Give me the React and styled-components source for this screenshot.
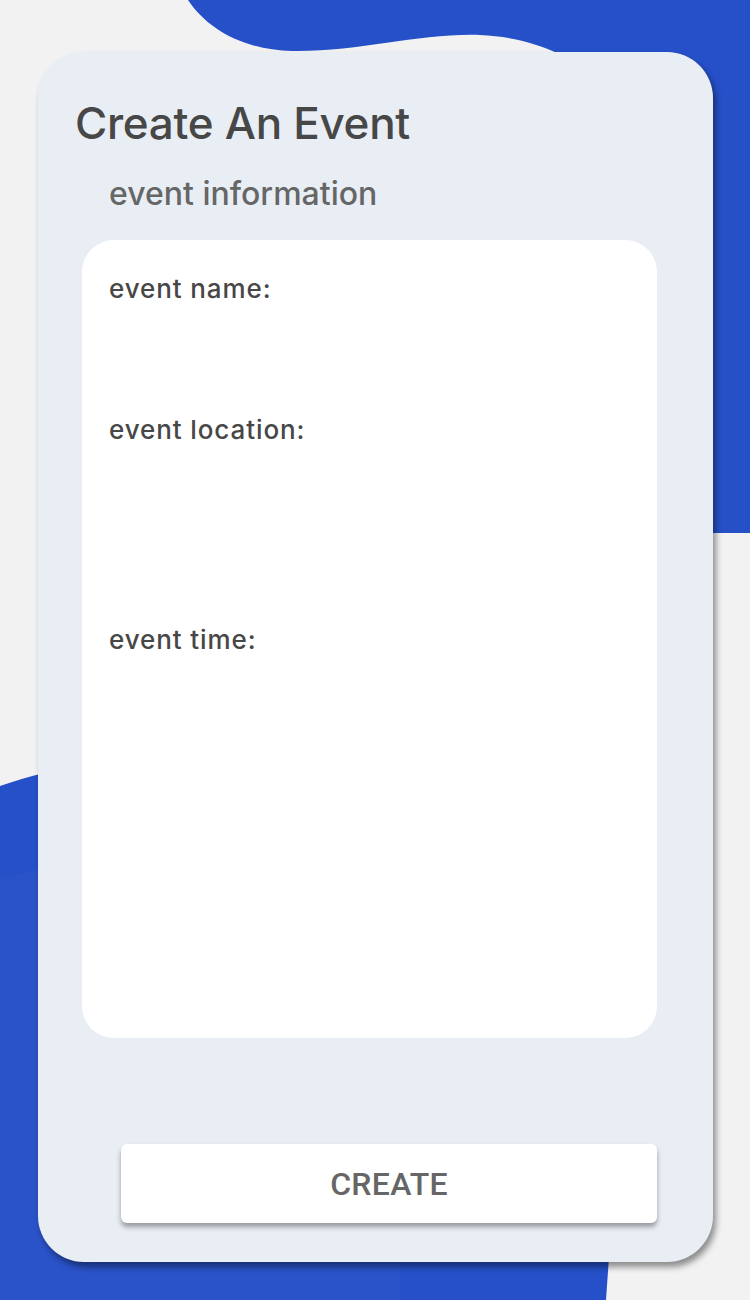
import React from "react";
import styled, { createGlobalStyle } from "styled-components";

const GlobalStyle = createGlobalStyle`
  html, body { margin: 0; padding: 0; background: #f2f2f2; }
  * { box-sizing: border-box; }
`;

const Page = styled.div`
  position: relative;
  width: 750px;
  height: 1300px;
  overflow: hidden;
  background: #f2f2f2;
  padding: 52px 37px 0 38px;
  font-family: Inter, "Open Sans", sans-serif;
`;

const Backdrop = styled.svg`
  position: absolute;
  inset: 0;
  width: 750px;
  height: 1300px;
  z-index: 0;
`;

const Card = styled.section`
  position: relative;
  z-index: 1;
  width: 675px;
  height: 1210px;
  background: #e9eef5;
  border-radius: 46px;
  box-shadow: 3px 5px 6px rgba(0, 0, 0, 0.42);
  display: flex;
  flex-direction: column;
  padding: 43px 56px 0 37px;
`;

const Title = styled.h1`
  margin: 0;
  font-size: 44px;
  font-weight: 500;
  line-height: 56px;
  color: #474747;
  letter-spacing: -0.3px;
`;

const Subtitle = styled.h2`
  margin: 23px 0 0 34px;
  font-size: 32px;
  font-weight: 500;
  line-height: 40px;
  color: #666666;
  letter-spacing: 0;
`;

const Panel = styled.div`
  margin: 26px 0 0 7px;
  width: 575px;
  height: 798px;
  background: #ffffff;
  border-radius: 32px;
  padding: 33px 27px;
  display: flex;
  flex-direction: column;
`;

const Field = styled.div`
  height: ${(p) => p.$space}px;
`;

const Label = styled.label`
  display: block;
  font-size: 26px;
  font-weight: 500;
  line-height: 32px;
  color: #474747;
  letter-spacing: 0.9px;
`;

const Footer = styled.div`
  margin-top: auto;
  padding: 0 0 39px 46px;
`;

const CreateButton = styled.button`
  width: 536px;
  height: 79px;
  border: none;
  border-radius: 6px;
  background: #ffffff;
  box-shadow: 0 4px 5px rgba(0, 0, 0, 0.35);
  font-family: Roboto, "Liberation Sans", sans-serif;
  font-size: 32px;
  font-weight: 500;
  color: #666666;
  letter-spacing: 0.3px;
  cursor: pointer;
`;

const fields = [
  { label: "event name:", space: 141 },
  { label: "event location:", space: 210 },
  { label: "event time:", space: 100 },
];

export default function App() {
  return (
    <>
      <GlobalStyle />
      <Page>
        <Backdrop viewBox="0 0 750 1300" aria-hidden="true">
          <path
            d="M188,0 C208,30 245,50 292,51 C360,52 420,33 480,35 C530,37 570,55 600,80 L650,533 L750,533 L750,0 Z"
            fill="#2650c8"
          />
          <path
            d="M0,786 C100,752 250,735 400,765 C550,800 640,900 620,1100 L606,1300 L0,1300 Z"
            fill="#2650c8"
          />
          <path
            d="M0,880 C120,840 260,860 400,960 L400,1300 L0,1300 Z"
            fill="#ffffff"
            opacity="0.02"
          />
        </Backdrop>
        <Card>
          <Title>Create An Event</Title>
          <Subtitle>event information</Subtitle>
          <Panel>
            {fields.map((f) => (
              <Field key={f.label} $space={f.space}>
                <Label>{f.label}</Label>
              </Field>
            ))}
          </Panel>
          <Footer>
            <CreateButton>CREATE</CreateButton>
          </Footer>
        </Card>
      </Page>
    </>
  );
}
